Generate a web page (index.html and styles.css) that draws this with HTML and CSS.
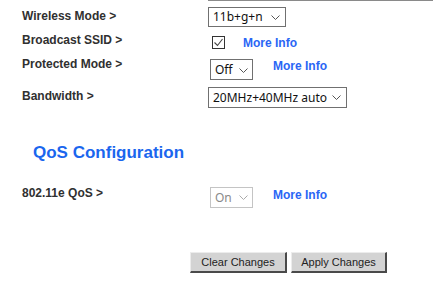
FILE: index.html
```html
<!DOCTYPE html>
<html>
<head>
<meta charset="utf-8">
<link rel="stylesheet" href="styles.css">
</head>
<body>
<div class="topline"></div>
<form class="form">
  <div class="row row1">
    <div class="label">Wireless Mode &gt;</div>
    <span class="selwrap w-mode">
      <select class="sel"><option>11b+g+n</option></select>
      <svg class="chev" width="9" height="5" viewBox="0 0 9 5"><path d="M0.5 0.5 L4.5 4.5 L8.5 0.5" fill="none" stroke="#555" stroke-width="1"/></svg>
    </span>
  </div>
  <div class="row row2">
    <div class="label">Broadcast SSID &gt;</div>
    <span class="check"><svg width="11" height="11" viewBox="0 0 11 11"><path d="M1.5 5.5 L4.5 8.5 L9.5 2" fill="none" stroke="#444" stroke-width="1.1"/></svg></span>
    <a class="more more2">More Info</a>
  </div>
  <div class="row row3">
    <div class="label">Protected Mode &gt;</div>
    <span class="selwrap w-off">
      <select class="sel"><option>Off</option></select>
      <svg class="chev" width="9" height="5" viewBox="0 0 9 5"><path d="M0.5 0.5 L4.5 4.5 L8.5 0.5" fill="none" stroke="#555" stroke-width="1"/></svg>
    </span>
    <a class="more more3">More Info</a>
  </div>
  <div class="row row4">
    <div class="label">Bandwidth &gt;</div>
    <span class="selwrap w-bw">
      <select class="sel"><option>20MHz+40MHz auto</option></select>
      <svg class="chev" width="9" height="5" viewBox="0 0 9 5"><path d="M0.5 0.5 L4.5 4.5 L8.5 0.5" fill="none" stroke="#555" stroke-width="1"/></svg>
    </span>
  </div>
  <h2 class="heading">QoS Configuration</h2>
  <div class="row row5">
    <div class="label">802.11e QoS &gt;</div>
    <span class="selwrap w-on">
      <select class="sel disabled" disabled><option>On</option></select>
      <svg class="chev" width="9" height="5" viewBox="0 0 9 5"><path d="M0.5 0.5 L4.5 4.5 L8.5 0.5" fill="none" stroke="#aaa" stroke-width="1"/></svg>
    </span>
    <a class="more more5">More Info</a>
  </div>
  <div class="buttons">
    <button type="button" class="btn btn-clear">Clear Changes</button>
    <button type="button" class="btn btn-apply">Apply Changes</button>
  </div>
</form>
</body>
</html>
```

FILE: styles.css
```css
html, body {
  margin: 0;
  padding: 0;
  background: #fff;
}
body {
  font-family: "Liberation Sans", Arial, sans-serif;
  color: #2b2b2b;
}
.topline {
  margin-left: 208px;
  border-top: 1px solid #8a8a8a;
  height: 0;
}
.form {
  margin: 0;
  padding-left: 22px;
}
.row {
  display: flex;
  align-items: flex-start;
}
.label {
  width: 186px;
  flex: none;
  font-size: 12px;
  font-weight: bold;
  line-height: 14px;
  color: #303030;
}
.row1 { margin-top: 6px; }
.row1 .label { padding-top: 2px; }
.row2 { margin-top: 6px; }
.row3 { margin-top: 7px; }
.row4 { margin-top: 7px; }
.row4 .label { padding-top: 2px; }
.row5 { margin-top: 23px; }

.selwrap {
  position: relative;
  display: inline-block;
  flex: none;
}
.sel {
  -webkit-appearance: none;
  appearance: none;
  display: block;
  margin: 0;
  height: 20px;
  border: 1px solid #707070;
  border-radius: 0;
  background: #fff;
  padding: 0 0 0 4px;
  font-family: "Noto Sans", "Open Sans", sans-serif;
  font-size: 12px;
  color: #111;
  line-height: 18px;
  box-sizing: border-box;
}
.chev {
  position: absolute;
  top: 8px;
  right: 6px;
}
.w-mode .sel { width: 78px; }
.w-off { margin-left: 2px; margin-top: 2px; }
.w-off .sel { width: 43px; height: 21px; }
.w-off .chev { top: 9px; right: 5px; }
.w-bw .sel { width: 139px; height: 21px; }
.w-bw .chev { top: 8px; right: 6px; }
.w-on { margin-left: 2px; margin-top: 1px; }
.w-on .sel { width: 43px; height: 21px; }
.w-on .chev { top: 8px; right: 5px; }
.sel.disabled {
  border-color: #c4c4c4;
  color: #8a8a8a;
  opacity: 1;
}

.check {
  display: inline-flex;
  align-items: center;
  justify-content: center;
  box-sizing: border-box;
  width: 13px;
  height: 13px;
  border: 1px solid #333;
  margin-left: 4px;
  margin-top: 3px;
  flex: none;
}
.more {
  font-size: 12px;
  font-weight: bold;
  line-height: 14px;
  color: #2a66f5;
  cursor: pointer;
}
.more2 { margin-left: 18px; margin-top: 3px; }
.more3 { margin-left: 20px; margin-top: 2px; }
.more5 { margin-left: 20px; margin-top: 1.5px; }

.heading {
  margin: 35px 0 0 11px;
  font-size: 17px;
  line-height: 20px;
  font-weight: bold;
  color: #1a66ee;
}

.buttons {
  display: flex;
  gap: 4px;
  margin-top: 44px;
  margin-left: 168px;
}
.btn {
  height: 21px;
  margin: 0;
  padding: 0;
  box-sizing: border-box;
  background: #d3d3d3;
  border-style: solid;
  border-width: 1px 2px 2px 1px;
  border-color: #ececec #4a4a4a #4a4a4a #ececec;
  font-family: "Liberation Sans", Arial, sans-serif;
  font-size: 11px;
  color: #222;
  line-height: 17px;
}
.btn-clear { width: 97px; }
.btn-apply { width: 96px; }
```
